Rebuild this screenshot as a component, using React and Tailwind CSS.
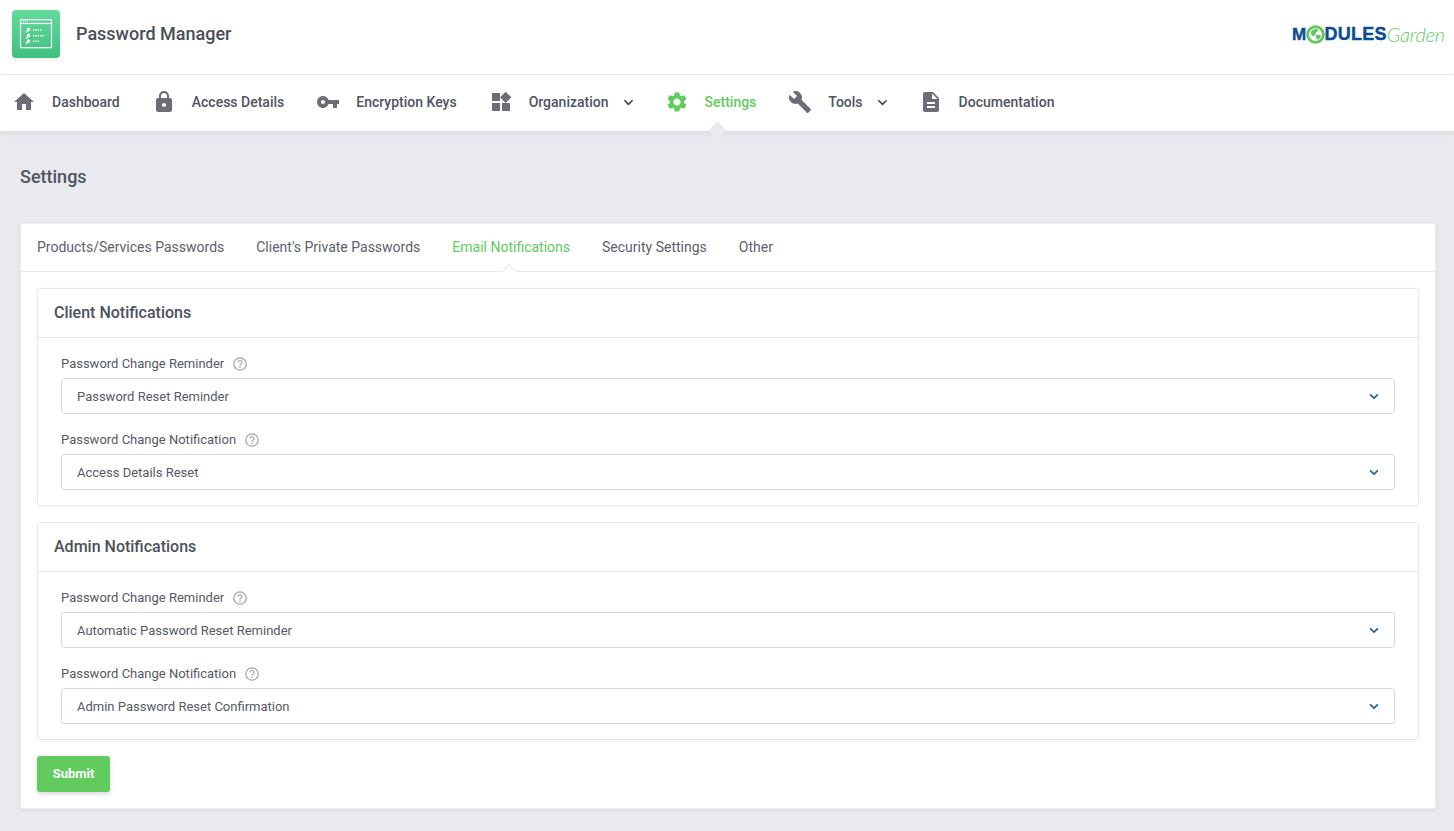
import React from "react";

const P = {
  home: "M10 20v-6h4v6h5v-8h3L12 3 2 12h3v8z",
  lock: "M18 8h-1V6c0-2.76-2.24-5-5-5S7 3.24 7 6v2H6c-1.1 0-2 .9-2 2v10c0 1.1.9 2 2 2h12c1.1 0 2-.9 2-2V10c0-1.1-.9-2-2-2zm-6 9c-1.1 0-2-.9-2-2s.9-2 2-2 2 .9 2 2-.9 2-2 2zm3.1-9H8.9V6c0-1.71 1.39-3.1 3.1-3.1 1.71 0 3.1 1.39 3.1 3.1v2z",
  key: "M12.65 10C11.83 7.67 9.61 6 7 6c-3.31 0-6 2.69-6 6s2.69 6 6 6c2.61 0 4.83-1.67 5.65-4H17v4h4v-4h2v-4H12.65zM7 14c-1.1 0-2-.9-2-2s.9-2 2-2 2 .9 2 2-.9 2-2 2z",
  widgets: "M13 13v8h8v-8h-8zM3 21h8v-8H3v8zM3 3v8h8V3H3zm13.66-1.31L11 7.34 16.66 13l5.66-5.66-5.66-5.65z",
  gear: "M19.14 12.94c.04-.3.06-.61.06-.94 0-.32-.02-.64-.07-.94l2.03-1.58c.18-.14.23-.41.12-.61l-1.92-3.32c-.12-.22-.37-.29-.59-.22l-2.39.96c-.5-.38-1.03-.7-1.62-.94l-.36-2.54c-.04-.24-.24-.41-.48-.41h-3.84c-.24 0-.43.17-.47.41l-.36 2.54c-.59.24-1.13.57-1.62.94l-2.39-.96c-.22-.08-.47 0-.59.22L2.74 8.87c-.12.21-.08.47.12.61l2.03 1.58c-.05.3-.09.63-.09.94s.02.64.07.94l-2.03 1.58c-.18.14-.23.41-.12.61l1.92 3.32c.12.22.37.29.59.22l2.39-.96c.5.38 1.03.7 1.62.94l.36 2.54c.05.24.24.41.48.41h3.84c.24 0 .44-.17.47-.41l.36-2.54c.59-.24 1.13-.56 1.62-.94l2.39.96c.22.08.47 0 .59-.22l1.92-3.32c.12-.22.07-.47-.12-.61l-2.01-1.58zM12 15.6c-1.98 0-3.6-1.62-3.6-3.6s1.62-3.6 3.6-3.6 3.6 1.62 3.6 3.6-1.62 3.6-3.6 3.6z",
  wrench: "M22.7 19l-9.1-9.1c.9-2.3.4-5-1.5-6.9-2-2-5-2.4-7.4-1.3L9 6 6 9 1.6 4.7C.4 7.1.9 10.1 2.9 12.1c1.9 1.9 4.6 2.4 6.9 1.5l9.1 9.1c.4.4 1 .4 1.4 0l2.3-2.3c.5-.4.5-1.1.1-1.4z",
  doc: "M14 2H6c-1.1 0-1.99.9-1.99 2L4 20c0 1.1.89 2 1.99 2H18c1.1 0 2-.9 2-2V8l-6-6zm2 16H8v-2h8v2zm0-4H8v-2h8v2zm-3-5V3.5L18.5 9H13z",
};

function Icon({ d, className }) {
  return (
    <svg viewBox="0 0 24 24" className={className} fill="currentColor" aria-hidden="true">
      <path d={d} />
    </svg>
  );
}

function Chevron({ className }) {
  return (
    <svg viewBox="0 0 12 8" className={className} fill="none" stroke="currentColor" strokeWidth="1.9" aria-hidden="true">
      <path d="M1.3 1.4 6 6l4.7-4.6" />
    </svg>
  );
}

function Help() {
  return (
    <svg viewBox="0 0 14 14" className="ml-[9px] h-[14px] w-[14px] text-[#a3a6ad]" fill="none" aria-hidden="true">
      <circle cx="7" cy="7" r="6.2" stroke="currentColor" strokeWidth="1.3" />
      <path d="M5.1 5.5a1.95 1.95 0 1 1 3 1.6c-.7.45-1.1.8-1.1 1.6" stroke="currentColor" strokeWidth="1.2" />
      <circle cx="7" cy="10.4" r=".8" fill="currentColor" />
    </svg>
  );
}

function AppTile() {
  return (
    <div className="h-12 w-12 rounded-[4px] bg-gradient-to-b from-[#62dc9b] to-[#41bf80] shadow-[0_2px_6px_rgba(0,0,0,0.08)]">
      <svg viewBox="0 0 48 48" className="h-12 w-12" fill="none" stroke="#fff" aria-hidden="true">
        <rect x="8.5" y="9.7" width="31" height="28" strokeWidth="1.2" />
        <path d="M8.5 13.5h31" strokeWidth="1.2" />
        <path d="M11 11.7h5" strokeWidth=".8" strokeDasharray="1 1" />
        <g strokeWidth="1.2">
          <circle cx="16.5" cy="19.5" r="1.1" fill="#fff" />
          <path d="M15.7 20.5 14 22.5" />
          <circle cx="16.5" cy="25.5" r="1.1" fill="#fff" />
          <path d="M15.7 26.5 14 28.5" />
          <circle cx="16.5" cy="31" r="1.1" fill="#fff" />
          <path d="M15.7 32 14 34" />
        </g>
        <path d="M21 20h9.5M21 25.7h12M21 31.2h6.5" strokeWidth="1.4" strokeDasharray="1.3 1.1" />
      </svg>
    </div>
  );
}

function BrandLogo() {
  return (
    <div className="flex items-center font-['Liberation_Sans',sans-serif] leading-none">
      <span className="text-[17px] font-bold tracking-[-0.6px] text-[#0b4c94] [-webkit-text-stroke:0.4px_#0b4c94]">M</span>
      <svg viewBox="0 0 24 24" className="h-[19px] w-[19px] shrink-0" aria-hidden="true">
        <circle cx="12" cy="12" r="10" fill="#fff" stroke="#5fc85a" strokeWidth="3.6" />
        <path d="M6 9c2-3.5 6-4.5 9-3.5 1 1.8-.5 3.2-2.5 4 .6 2.2-2 3-3 5-1.5-1.5-4-3-3.5-5.5zM13 13c2-1 5-1 6 .8-.7 2.4-2.8 4.2-5 4.6-1.2-1.6-2-3.6-1-5.4z" fill="#5fc85a" />
      </svg>
      <span className="text-[18px] font-bold tracking-[0.2px] text-[#0b4c94] [-webkit-text-stroke:0.4px_#0b4c94]">DULES</span>
      <span className="font-['Lato',sans-serif] text-[20px] font-light italic tracking-[-0.2px] text-[#63cb5f]">Garden</span>
    </div>
  );
}

function NavItem({ icon, label, active, caret, mr = "mr-8" }) {
  return (
    <div className={`relative flex items-center ${mr}`}>
      <Icon d={icon} className={`h-6 w-6 shrink-0 ${active ? "text-[#62cb5e]" : "text-[#6b6e77]"}`} />
      <span className={`ml-4 text-sm font-medium ${active ? "text-[#62cb5e]" : "text-[#4f5460]"}`}>{label}</span>
      {caret && <Chevron className="ml-[14px] h-[7px] w-[11px] text-[#3d4450]" />}
    </div>
  );
}

function Field({ label, value, last }) {
  return (
    <div className={last ? "" : "mb-[17px]"}>
      <div className="mb-[5px] flex h-[18px] items-center text-[13px] leading-[18px] text-[#555a65]">
        {label}
        <Help />
      </div>
      <div className="flex h-9 items-center justify-between rounded-[3px] border border-[#d8d9e0] bg-white pl-[15px] pr-[15px] pt-[2px] text-[13px] text-[#555a65]">
        <span>{value}</span>
        <Chevron className="mb-[2px] h-[7px] w-[10px] text-[#1c5c9c]" />
      </div>
    </div>
  );
}

function Section({ title, fields, className = "" }) {
  return (
    <section className={`rounded-[3px] border border-[#e8e9ee] bg-white shadow-[0_1px_4px_rgba(60,65,90,0.06)] ${className}`}>
      <h2 className="flex h-[49px] items-center border-b border-[#e8e9ee] pl-4 text-base font-medium text-[#4c515c]">{title}</h2>
      <div className="pl-[23px] pr-[23px] pt-[17px] pb-[15px]">
        <Field label={fields[0][0]} value={fields[0][1]} />
        <Field label={fields[1][0]} value={fields[1][1]} last />
      </div>
    </section>
  );
}

export default function App() {
  return (
    <div className="min-h-[831px] w-full overflow-hidden bg-[#e8eaef] font-['Roboto',sans-serif]">
      <header className="flex h-[75px] items-center justify-between border-b border-[#eeeff3] bg-white pb-[6px] pl-3 pr-[9px]">
        <div className="flex items-center">
          <AppTile />
          <span className="ml-4 text-lg font-medium text-[#4a4f5a]">Password Manager</span>
        </div>
        <BrandLogo />
      </header>

      <nav className="relative flex h-14 items-center bg-white pb-[2px] pl-3 shadow-[0_2px_6px_rgba(60,65,90,0.1)]">
        <NavItem icon={P.home} label="Dashboard" />
        <NavItem icon={P.lock} label="Access Details" />
        <NavItem icon={P.key} label="Encryption Keys" />
        <NavItem icon={P.widgets} label="Organization" caret mr="mr-[31px]" />
        <NavItem icon={P.gear} label="Settings" active />
        <NavItem icon={P.wrench} label="Tools" caret mr="mr-[31px]" />
        <NavItem icon={P.doc} label="Documentation" />
        <span className="absolute left-[711px] top-[49px] h-[13px] w-[13px] rotate-45 bg-[#e8eaef]" />
      </nav>

      <main className="pb-[23px] pl-5 pr-[18px]">
        <h1 className="flex h-[92px] items-center text-lg font-medium text-[#4f5460]">Settings</h1>
        <div className="rounded-[3px] border border-[#eceef2] bg-white shadow-[0_1px_4px_rgba(60,65,90,0.08)]">
          <div className="relative flex h-[48px] items-center gap-8 border-b border-[#e8e9f0] pb-[2px] pl-4 text-sm text-[#5c616b]">
            <span>Products/Services Passwords</span>
            <span>Client's Private Passwords</span>
            <span className="text-[#62cb5e]">Email Notifications</span>
            <span>Security Settings</span>
            <span>Other</span>
            <span className="absolute left-[483px] top-[42px] h-[10px] w-[10px] rotate-45 border-l border-t border-[#e8e9f0] bg-white" />
          </div>
          <div className="p-4">
            <Section
              title="Client Notifications"
              fields={[
                ["Password Change Reminder", "Password Reset Reminder"],
                ["Password Change Notification", "Access Details Reset"],
              ]}
            />
            <Section
              className="mt-[16px]"
              title="Admin Notifications"
              fields={[
                ["Password Change Reminder", "Automatic Password Reset Reminder"],
                ["Password Change Notification", "Admin Password Reset Confirmation"],
              ]}
            />
            <button className="mt-4 h-9 w-[73px] rounded-[3px] bg-[#62cb5e] text-[13px] font-bold text-white shadow-[0_2px_4px_rgba(60,65,90,0.2)]">
              Submit
            </button>
          </div>
        </div>
      </main>
    </div>
  );
}
